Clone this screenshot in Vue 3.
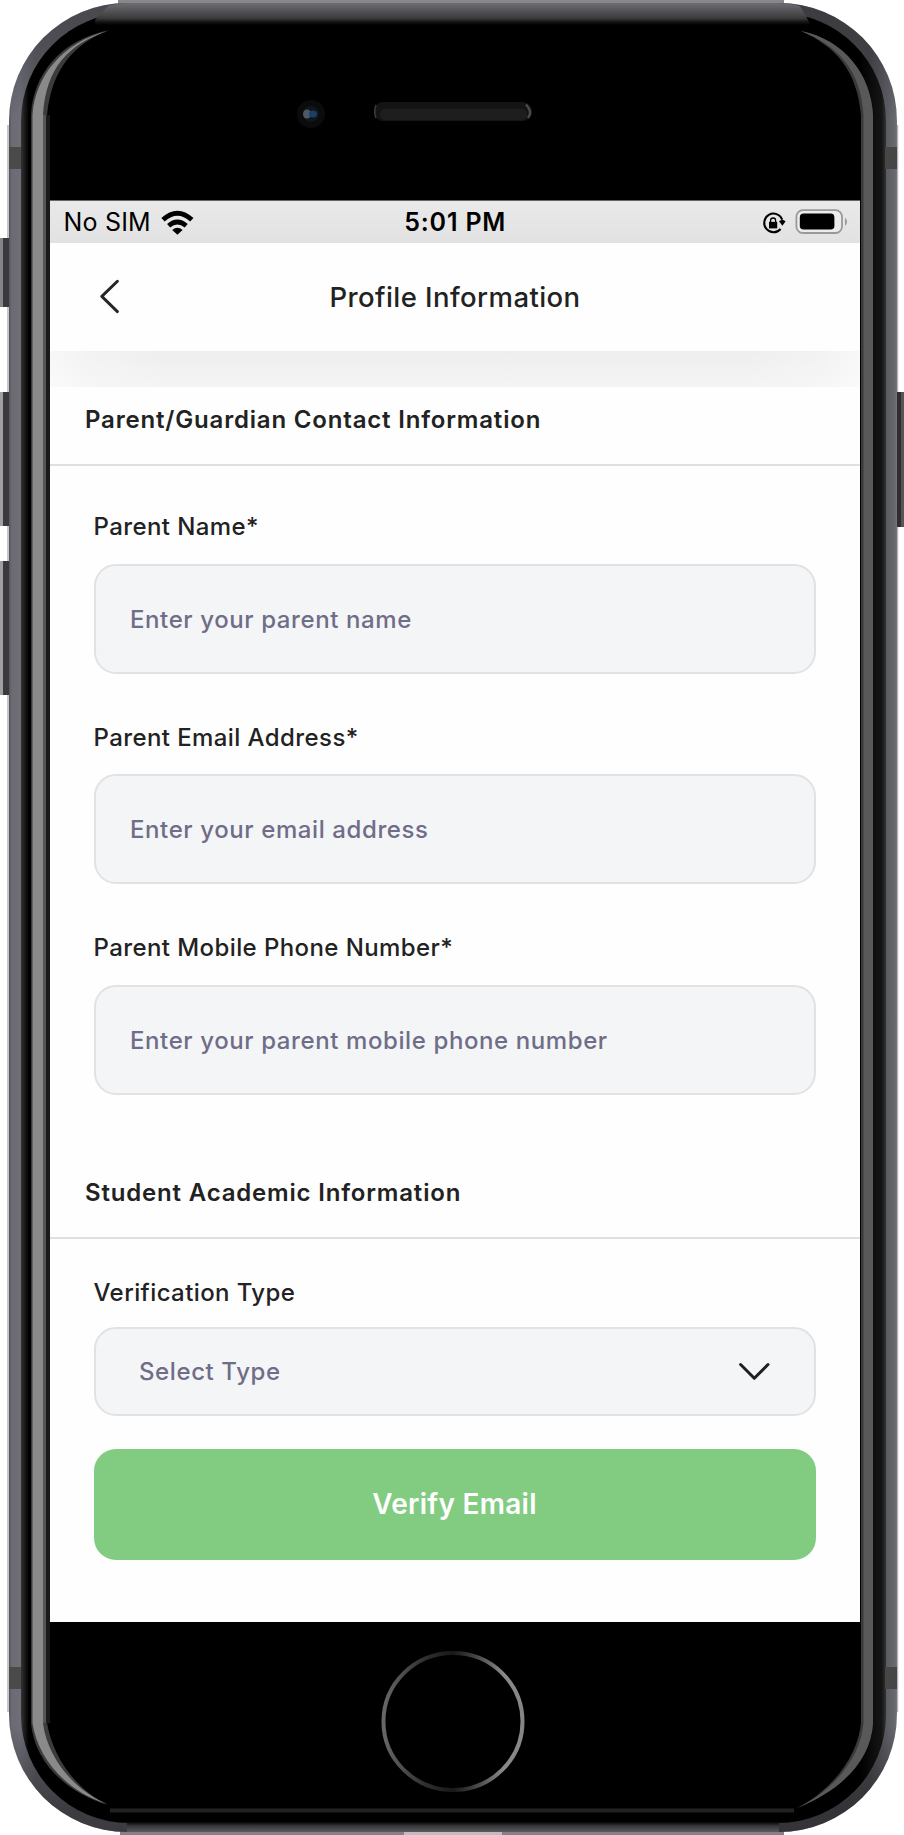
<script setup>
const fields = [
  { label: 'Parent Name*', hint: 'Enter your parent name' },
  { label: 'Parent Email Address*', hint: 'Enter your email address' },
  { label: 'Parent Mobile Phone Number*', hint: 'Enter your parent mobile phone number' },
]
</script>

<template>
  <div class="phone">
    <svg class="frame" width="904" height="1835" viewBox="0 0 904 1835" aria-hidden="true">
      <defs>
        <linearGradient id="body" x1="9" x2="897" y1="0" y2="0" gradientUnits="userSpaceOnUse">
          <stop offset="0" stop-color="#55555b" />
          <stop offset="0.003" stop-color="#6b6b74" />
          <stop offset="0.012" stop-color="#6e6e77" />
          <stop offset="0.03" stop-color="#5e5e65" />
          <stop offset="0.97" stop-color="#47474c" />
          <stop offset="0.989" stop-color="#5c5c63" />
          <stop offset="0.998" stop-color="#68686f" />
          <stop offset="1" stop-color="#77777c" />
        </linearGradient>
        <linearGradient id="inner" x1="21" x2="886" y1="0" y2="0" gradientUnits="userSpaceOnUse">
          <stop offset="0" stop-color="#333335" />
          <stop offset="0.004" stop-color="#1c1c1c" />
          <stop offset="0.009" stop-color="#000" />
          <stop offset="0.97" stop-color="#000" />
          <stop offset="0.985" stop-color="#0d0d0d" />
          <stop offset="0.995" stop-color="#151515" />
          <stop offset="1" stop-color="#333336" />
        </linearGradient>
        <linearGradient id="cornerShade" x1="0" x2="0" y1="0" y2="1835" gradientUnits="userSpaceOnUse">
          <stop offset="0.012" stop-color="#26262a" stop-opacity="0.35" />
          <stop offset="0.065" stop-color="#26262a" stop-opacity="0" />
          <stop offset="0.94" stop-color="#26262a" stop-opacity="0" />
          <stop offset="0.985" stop-color="#26262a" stop-opacity="0.6" />
        </linearGradient>
        <linearGradient id="topBar" x1="0" x2="0" y1="3" y2="25" gradientUnits="userSpaceOnUse">
          <stop offset="0" stop-color="#6d6d74" />
          <stop offset="0.35" stop-color="#555558" />
          <stop offset="0.7" stop-color="#3a3a3a" />
          <stop offset="0.85" stop-color="#161616" />
          <stop offset="1" stop-color="#000" />
        </linearGradient>
        <linearGradient id="bottomBar" x1="0" x2="0" y1="1822" y2="1832" gradientUnits="userSpaceOnUse">
          <stop offset="0" stop-color="#060607" />
          <stop offset="0.4" stop-color="#37373a" />
          <stop offset="1" stop-color="#5c5a60" />
        </linearGradient>
        <linearGradient id="homeRing" x1="381" x2="525" y1="0" y2="0" gradientUnits="userSpaceOnUse">
          <stop offset="0" stop-color="#6a6a6a" />
          <stop offset="0.3" stop-color="#303030" />
          <stop offset="0.5" stop-color="#181818" />
          <stop offset="0.68" stop-color="#4c4c4c" />
          <stop offset="0.85" stop-color="#8a8a8a" />
          <stop offset="1" stop-color="#858585" />
        </linearGradient>
      </defs>

      <g>
        <path d="M0 238h3v69H0z" fill="#858587" />
        <path d="M3 238h7v69H3z" fill="#3a3a3e" />
        <path d="M0 392h3v134H0z" fill="#a0a0a2" />
        <path d="M3 392h7v134H3z" fill="#3a3a3e" />
        <path d="M0 561h3v134H0z" fill="#a0a0a2" />
        <path d="M3 561h7v134H3z" fill="#3a3a3e" />
        <path d="M895 392h6v135h-6z" fill="#2e2e31" />
        <path d="M901 392h3v135h-3z" fill="#55555a" />
      </g>

      <path d="M8 125V238M8 307V392M8 526V561M8 695V1712" stroke="#c6c6c8" stroke-width="2" />
      <path d="M897.5 125V392M897.5 527V1712" stroke="#b4b4b8" stroke-width="1.5" />
      <path d="M118 0H784V4H118z" fill="#88888b" />
      <path d="M120 1830H784V1835H120z" fill="#858287" />
      <path d="M404 1831H502V1835H404z" fill="#bfbdbf" />
      <rect x="9" y="3" width="888" height="1829" rx="118" fill="url(#body)" />
      <rect x="9" y="3" width="888" height="1829" rx="118" fill="url(#cornerShade)" />
      <rect x="21" y="13" width="865" height="1810" rx="108" fill="url(#inner)" />
      <path d="M127 1822H779V1832H127z" fill="url(#bottomBar)" />
      <path d="M108 6Q118 3 130 3H776Q790 3 800 6L812 27H95V20z" fill="url(#topBar)" />
      <path d="M110 1810.5H794" stroke="#222" stroke-width="4" />

      <path d="M31 115C33 75 60 40 109 30C74 44 52 68 47 115V1723C53 1757 75 1789 108 1805C64 1792 34 1760 31 1723z" fill="#3c3c3c" />
      <path d="M43 115H46.5V1723H43z" fill="#555" />
      <path d="M32.5 115C35 77 62 42 108 31C68 44 46 68 43 115V1723C47 1756 72 1789 107 1804C68 1792 38 1760 32.5 1723z" fill="#8a8a8a" />
      <path d="M46 115H50V1723H46z" fill="#1a1a1a" />

      <path d="M873 115C871 75 845 40 801 31C835 46 857 70 861 115V1723C858 1755 834 1789 797 1808C842 1790 871 1760 873 1723z" fill="#3a3a3a" />
      <path d="M873 115C871 75 845 40 801 31C838 46 861 70 863.5 115V1723C861 1755 837 1789 797 1808C842 1790 871 1760 873 1723z" fill="#595959" />

      <path d="M9 147h12v22H9zM9 1667h12v22H9z" fill="#4a4a4a" />
      <path d="M885 147h12v22h-12zM885 1667h12v22h-12z" fill="#464646" />

      <circle cx="311" cy="114" r="14" fill="#090b0c" />
      <circle cx="311" cy="114" r="8" fill="#12161a" />
      <ellipse cx="307" cy="114" rx="4" ry="4.5" fill="#4c5a68" />
      <ellipse cx="313" cy="114" rx="4" ry="3.5" fill="#1c3f66" />
      <rect x="374" y="102" width="158" height="19" rx="9" fill="#141414" />
      <rect x="380" y="109" width="147" height="11" rx="5" fill="#1e1e1e" />
      <path d="M376 105Q373.5 112 376 118" fill="none" stroke="#3c3c3c" stroke-width="1.5" />
      <path d="M526 104.5Q533 112 528 118" fill="none" stroke="#4a4a4a" stroke-width="2.5" />

      <ellipse cx="453" cy="1721.5" rx="69.5" ry="68.5" fill="none" stroke="url(#homeRing)" stroke-width="4" />
    </svg>

    <main class="screen">
      <div class="status">
        <div class="carrier">
          <span>No SIM</span>
          <svg width="34" height="26" viewBox="160 208 34 26" aria-hidden="true">
            <path d="M163 218.8Q177.4 205.6 191.8 218.8" fill="none" stroke="#000" stroke-width="4.9" />
            <path d="M168.6 224.8Q177.4 217.2 186.2 224.8" fill="none" stroke="#000" stroke-width="4.6" />
            <path d="M172.2 229Q177.4 224.6 182.6 229L177.4 233.8z" />
          </svg>
        </div>
        <span class="clock">5:01 PM</span>
        <svg class="indicators" width="88" height="30" viewBox="760 206 88 30" aria-hidden="true">
          <path d="M783.2 218.6A9.3 9.3 0 1 0 781.6 228" fill="none" stroke="#000" stroke-width="2" />
          <path d="M780 220.2L783.2 218.4L786.6 220.2L783.4 224.8z" />
          <path d="M770 220.8h8.2v6.6h-8.2z" />
          <path d="M771.6 221V219.6a2.5 2.6 0 0 1 5 0V221" fill="none" stroke="#000" stroke-width="1.3" />
          <rect x="797.4" y="209.2" width="45.6" height="22.8" rx="6.5" fill="#ececec" stroke="#999" stroke-width="1.8" />
          <rect x="800.8" y="212.6" width="34.6" height="16" rx="3.8" />
          <path d="M846 216.8Q848 217.8 848 220.8T846 224.8z" fill="#999" />
        </svg>
      </div>

      <header class="bar">
        <svg width="20" height="36" viewBox="100 280 20 36" aria-hidden="true">
          <path d="M117.4 282.2L101.8 297.4L117.4 312.6" fill="none" stroke="#262626" stroke-width="2.9" stroke-linecap="round" stroke-linejoin="round" />
        </svg>
        <h1>Profile Information</h1>
      </header>
      <div class="shade"></div>

      <h2>Parent/Guardian Contact Information</h2>
      <div class="fields">
        <div v-for="f in fields" :key="f.label" class="field">
          <span class="label">{{ f.label }}</span>
          <div class="input">{{ f.hint }}</div>
        </div>
      </div>

      <h2>Student Academic Information</h2>
      <div class="verify">
        <span class="label">Verification Type</span>
        <div class="input select">
          <span>Select Type</span>
          <svg width="34" height="22" viewBox="738 1360.5 34 22" aria-hidden="true">
            <path d="M740.6 1365L754.3 1378.8L768 1365" fill="none" stroke="#1f1f1f" stroke-width="3" stroke-linecap="round" stroke-linejoin="round" />
          </svg>
        </div>
        <button type="button">Verify Email</button>
      </div>
    </main>
  </div>
</template>

<style>
body {
  background: #fff;
}
</style>

<style scoped>
.phone {
  display: grid;
  width: 904px;
  height: 1835px;
  overflow: hidden;
  font-family: Inter, "Liberation Sans", sans-serif;
}
.frame,
.screen {
  grid-area: 1 / 1;
}
.frame {
  display: block;
}
.screen {
  z-index: 1;
  width: 810px;
  height: 1422px;
  margin: 200px 0 0 50px;
  background: #fefefe;
  color: #222;
}
.status {
  display: grid;
  grid-template-columns: 1fr auto 1fr;
  align-items: center;
  box-sizing: border-box;
  height: 43px;
  padding: 0 13px 0 13.5px;
  border-top: 1px solid #666;
  background: linear-gradient(#e9e9e9, #e2e2e2);
  color: #000;
}
.carrier {
  display: flex;
  align-items: center;
  gap: 9px;
  font-size: 25px;
  letter-spacing: 0.2px;
}
.clock {
  font-size: 25px;
  font-weight: 600;
  letter-spacing: 0.8px;
}
.indicators {
  justify-self: end;
}
.bar {
  display: grid;
  grid-template-columns: 1fr auto 1fr;
  align-items: center;
  box-sizing: border-box;
  height: 108px;
  padding: 0 50px;
}
h1 {
  margin: 0;
  font-size: 27.5px;
  font-weight: 500;
  line-height: 36px;
  letter-spacing: 0.43px;
}
.shade {
  height: 36px;
  background:
    linear-gradient(90deg, rgba(254, 254, 254, 0.6), rgba(254, 254, 254, 0.25) 40px, rgba(254, 254, 254, 0) 120px, rgba(254, 254, 254, 0) 690px, rgba(254, 254, 254, 0.25) 770px, rgba(254, 254, 254, 0.6)),
    linear-gradient(#eee, #f4f4f4);
}
h2 {
  box-sizing: border-box;
  height: 79px;
  margin: 0;
  padding: 18px 35px 0;
  border-bottom: 2px solid #e0e0e0;
  font-size: 24px;
  font-weight: 600;
  line-height: 30px;
  letter-spacing: 0.82px;
}
.fields {
  display: flex;
  flex-direction: column;
  gap: 47.8px;
  padding: 45.3px 44.5px 65px 43.5px;
}
.field {
  display: flex;
  flex-direction: column;
  gap: 21.7px;
}
.label {
  padding-top: 1px;
  font-size: 24px;
  font-weight: 500;
  line-height: 30px;
  letter-spacing: 0.41px;
}
.input {
  display: flex;
  align-items: center;
  box-sizing: border-box;
  height: 110px;
  padding: 1px 34px 0 34.5px;
  border: 2px solid #e1e2e3;
  border-radius: 22px;
  background: #f4f5f7;
  color: #6f6d87;
  font-size: 24px;
  font-weight: 500;
  letter-spacing: 0.6px;
}
.verify {
  display: flex;
  flex-direction: column;
  padding: 37.8px 44.5px 0 43.5px;
}
.select {
  justify-content: space-between;
  height: 89px;
  margin-top: 19.2px;
  padding: 0 42px 0 43.5px;
}
button {
  height: 111px;
  margin-top: 33px;
  padding: 0;
  border: 0;
  border-radius: 22px;
  background: #82cc82;
  color: #fff;
  font: 600 28px Inter, "Liberation Sans", sans-serif;
  letter-spacing: 0.27px;
}
</style>
